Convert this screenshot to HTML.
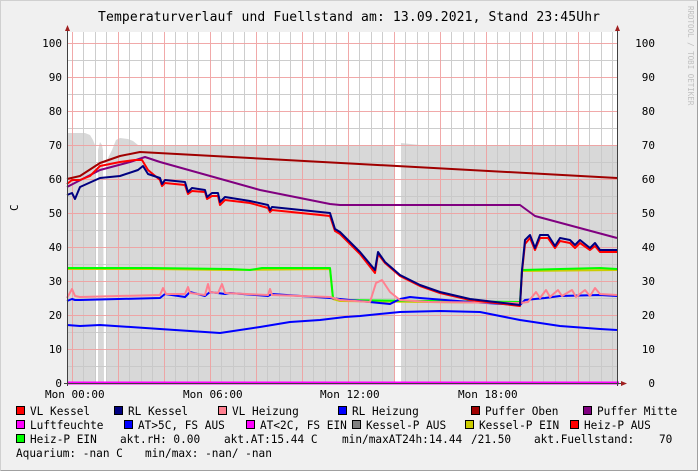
<!DOCTYPE html>
<html><head><meta charset="utf-8"><style>
html,body{margin:0;padding:0;width:698px;height:471px;overflow:hidden;background:#f0f0f0}
svg{display:block}
text{font-family:"DejaVu Sans Mono","Liberation Mono",monospace}
</style></head><body>
<svg width="698" height="471" xmlns="http://www.w3.org/2000/svg">
<rect x="0" y="0" width="698" height="471" fill="#f0f0f0"/>
<path d="M0.5 470.5V0.5H697.5" stroke="#d0d0d0" fill="none"/>
<path d="M697.5 0.5V470.5H0.5" stroke="#a0a0a0" fill="none"/>
<rect x="67" y="32" width="550" height="351" fill="#fff"/>
<path d="M67 383V133H72L85 133L90 135L93 140L95 145L96 383H98L98 150L100 142L102 145L103 150L104 383H107V160L112 150L116 140L120 138L128 139L133 141L138 145H395V383H401V143L420 145L500 145L617 145V383Z" fill="#d8d8d8"/>
<g stroke-width="1">
<g stroke="#c8c8c8" opacity="0.9">
<path d="M67 366.5H617M67 332.5H617M67 298.5H617M67 264.5H617M67 230.5H617M67 196.5H617M67 162.5H617M67 128.5H617M67 94.5H617M67 60.5H617"/>
<path d="M83.5 32V383M95.5 32V383M106.5 32V383M129.5 32V383M141.5 32V383M152.5 32V383M175.5 32V383M187.5 32V383M198.5 32V383M221.5 32V383M233.5 32V383M244.5 32V383M267.5 32V383M279.5 32V383M290.5 32V383M313.5 32V383M325.5 32V383M336.5 32V383M359.5 32V383M371.5 32V383M382.5 32V383M405.5 32V383M417.5 32V383M428.5 32V383M451.5 32V383M463.5 32V383M474.5 32V383M497.5 32V383M509.5 32V383M520.5 32V383M543.5 32V383M555.5 32V383M566.5 32V383M589.5 32V383M601.5 32V383M612.5 32V383"/>
</g>
<g stroke="#f0a0a0" opacity="0.9">
<path d="M67 349.5H617M67 315.5H617M67 281.5H617M67 247.5H617M67 213.5H617M67 179.5H617M67 145.5H617M67 111.5H617M67 77.5H617M67 43.5H617"/>
<path d="M72.5 32V383M118.5 32V383M164.5 32V383M210.5 32V383M256.5 32V383M302.5 32V383M348.5 32V383M394.5 32V383M440.5 32V383M486.5 32V383M532.5 32V383M578.5 32V383"/>
</g>
</g>
<g fill="none" stroke-width="2" stroke-linejoin="round">
<polyline stroke="#0000ff" points="67,325 80,326 100,325 160,329 220,333 260,327 290,322 320,320 345,317 360,316 400,312 440,311 480,312 520,320 560,326 600,329 617,330"/>
<polyline stroke="#cccc00" points="67,269 150,269 230,270 330,269 333,299 340,301 520,303 522,271 617,270"/>
<polyline stroke="#00ff00" points="67,268 150,268 230,269 250,270 262,268 330,268 333,298 340,300 520,302 522,270 560,269 600,268 617,269"/>
<polyline stroke="#0000ff" points="67,301 72,299 75,300 80,300 160,298 165,294 185,297 190,292 205,296 210,292 225,294 230,293 268,296 272,294 330,298 390,304 400,299 410,297 420,298 470,302 520,305 525,300 545,298 560,296 600,295 617,296"/>
<polyline stroke="#ff8090" points="67,298 72,289 75,296 80,297 160,295 163,288 166,294 185,294 188,287 190,293 205,295 208,284 210,292 218,293 222,284 225,293 268,295 270,289 272,295 330,297 340,300 370,302 376,283 382,280 390,292 400,300 430,302 520,303 528,302 536,292 540,298 546,290 550,297 558,290 562,296 572,290 576,297 585,290 590,296 595,288 600,294 617,295"/>
<polyline stroke="#a00000" points="67,179 80,176 100,163 120,156 140,152 617,178"/>
<polyline stroke="#800080" points="67,187 100,170 130,162 145,157 160,162 260,190 330,204 340,205 520,205 535,216 617,238"/>
<polyline stroke="#ff0000" points="67,184 72,180 80,180 90,176 100,166 120,162 135,160 142,160 148,170 160,180 162,186 165,183 185,185 188,194 192,191 205,192 207,199 212,196 218,196 220,205 225,200 250,203 268,208 270,212 272,210 330,216 335,231 340,234 360,254 375,273 378,254 385,263 400,276 420,286 440,293 470,300 520,306 522,272 525,244 530,238 535,250 540,238 548,238 555,248 560,241 570,243 575,248 580,243 590,250 595,246 600,252 617,252"/>
<polyline stroke="#000080" points="67,195 72,193 75,199 80,187 100,178 120,176 138,170 143,166 148,174 160,178 162,184 165,180 185,182 188,192 192,188 205,190 207,197 212,193 218,193 220,202 225,197 250,201 268,205 270,210 272,207 330,213 335,229 340,232 360,252 375,270 378,252 385,262 400,275 420,285 440,292 470,299 520,305 522,270 525,240 530,235 535,248 540,235 548,235 555,246 560,238 570,240 575,245 580,240 590,248 595,243 600,250 617,250"/>
</g>
<line x1="67" y1="383" x2="619" y2="383" stroke="#ff00ff" stroke-width="3"/>
<g stroke="#404040" stroke-width="1">
<line x1="67.5" y1="30" x2="67.5" y2="386"/>
<line x1="617.5" y1="30" x2="617.5" y2="386"/>
<line x1="64" y1="383.5" x2="622" y2="383.5"/>
</g>
<path d="M65 31L67.5 25L70 31Z M615 31L617.5 25L620 31Z M621 381L627 383.5L621 386Z" fill="#a02020"/>
<g font-size="11" fill="#000">
<g text-anchor="end">
<text x="62" y="47">100</text><text x="62" y="81">90</text><text x="62" y="115">80</text><text x="62" y="149">70</text><text x="62" y="183">60</text><text x="62" y="217">50</text><text x="62" y="251">40</text><text x="62" y="285">30</text><text x="62" y="319">20</text><text x="62" y="353">10</text><text x="62" y="387">0</text>
<text x="655" y="47">100</text><text x="655" y="81">90</text><text x="655" y="115">80</text><text x="655" y="149">70</text><text x="655" y="183">60</text><text x="655" y="217">50</text><text x="655" y="251">40</text><text x="655" y="285">30</text><text x="655" y="319">20</text><text x="655" y="353">10</text><text x="655" y="387">0</text>
</g>
<text x="45" y="398">Mon 00:00</text><text x="183" y="398">Mon 06:00</text><text x="320" y="398">Mon 12:00</text><text x="458" y="398">Mon 18:00</text>
<text transform="translate(18,211) rotate(-90)">C</text>
</g>
<text x="349" y="21" font-size="13" text-anchor="middle" textLength="502" lengthAdjust="spacing">Temperaturverlauf und Fuellstand am: 13.09.2021, Stand 23:45Uhr</text>
<text transform="translate(688,6) rotate(90)" font-size="7.5" fill="#c0c0c0">RRDTOOL / TOBI OETIKER</text>
<g stroke="#000" stroke-width="1">
<rect x="16.5" y="406.5" width="8" height="8" fill="#ff0000"/>
<rect x="114.5" y="406.5" width="8" height="8" fill="#000080"/>
<rect x="218.5" y="406.5" width="8" height="8" fill="#ff8090"/>
<rect x="338.5" y="406.5" width="8" height="8" fill="#0000ff"/>
<rect x="471.5" y="406.5" width="8" height="8" fill="#a00000"/>
<rect x="583.5" y="406.5" width="8" height="8" fill="#800080"/>
<rect x="16.5" y="420.5" width="8" height="8" fill="#ff00ff"/>
<rect x="124.5" y="420.5" width="8" height="8" fill="#0000ff"/>
<rect x="246.5" y="420.5" width="8" height="8" fill="#ff00ff"/>
<rect x="352.5" y="420.5" width="8" height="8" fill="#808080"/>
<rect x="465.5" y="420.5" width="8" height="8" fill="#cccc00"/>
<rect x="570.5" y="420.5" width="8" height="8" fill="#ff0000"/>
<rect x="16.5" y="434.5" width="8" height="8" fill="#00ff00"/>
</g>
<g font-size="11.1" fill="#000" xml:space="preserve">
<text x="30" y="415">VL Kessel</text><text x="128" y="415">RL Kessel</text><text x="232" y="415">VL Heizung</text><text x="352" y="415">RL Heizung</text><text x="485" y="415">Puffer Oben</text><text x="597" y="415">Puffer Mitte</text>
<text x="30" y="429">Luftfeuchte</text><text x="138" y="429">AT&gt;5C, FS AUS</text><text x="260" y="429">AT&lt;2C, FS EIN</text><text x="366" y="429">Kessel-P AUS</text><text x="479" y="429">Kessel-P EIN</text><text x="584" y="429">Heiz-P AUS</text>
<text x="30" y="443">Heiz-P EIN</text><text x="120" y="443">akt.rH: 0.00</text><text x="224" y="443">akt.AT:15.44 C</text><text x="342" y="443">min/maxAT24h:14.44</text><text x="471" y="443">/21.50</text><text x="534" y="443">akt.Fuellstand:</text><text x="659" y="443">70</text>
<text x="16" y="457">Aquarium: -nan C</text><text x="145" y="457">min/max: -nan/ -nan</text>
</g>
</svg>
</body></html>
